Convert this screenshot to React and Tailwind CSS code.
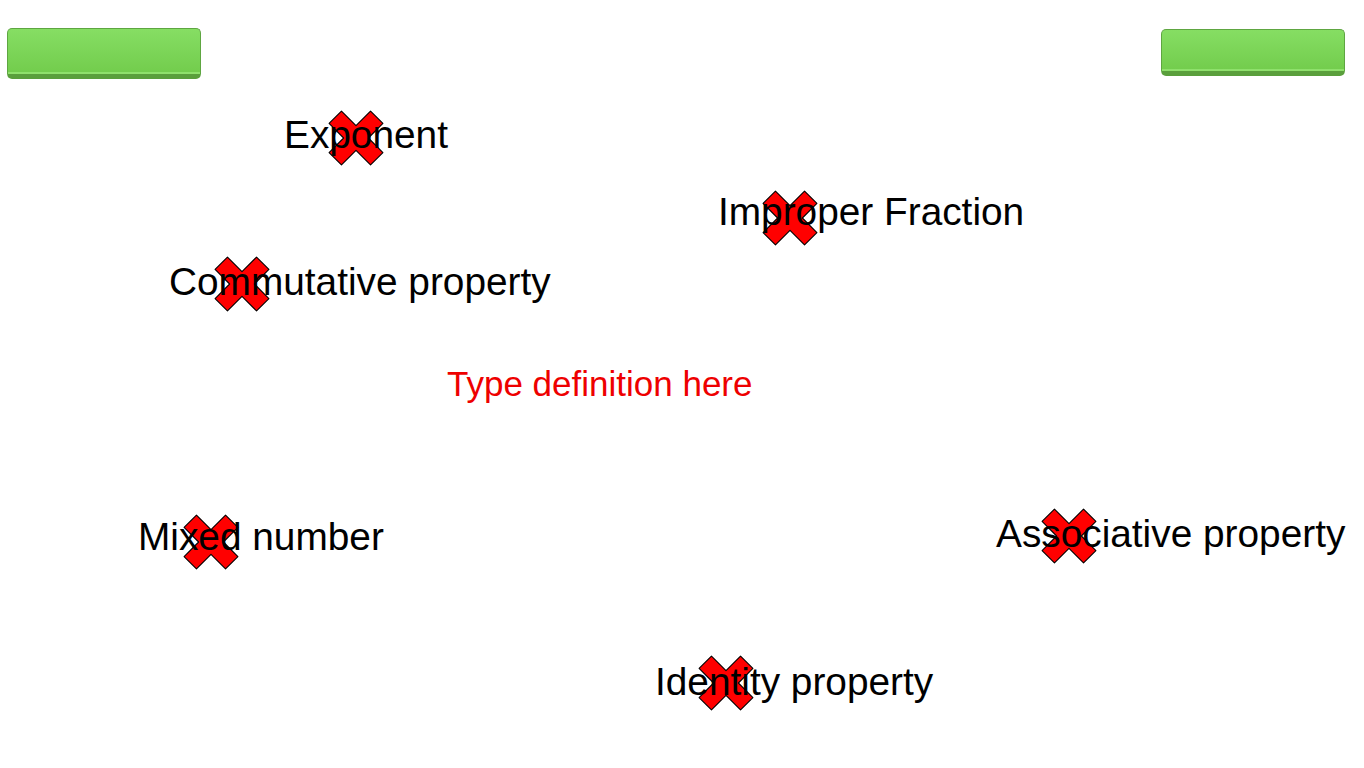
import React from "react";

const words = [
  { text: "Exponent", x: 284, y: 116, cx: 328, cy: 110 },
  { text: "Improper Fraction", x: 718, y: 193, cx: 762, cy: 190 },
  { text: "Commutative property", x: 169, y: 263, cx: 214, cy: 256 },
  { text: "Mixed number", x: 138, y: 518, cx: 183, cy: 514 },
  { text: "Associative property", x: 996, y: 515, cx: 1041, cy: 508 },
  { text: "Identity property", x: 655, y: 663, cx: 698, cy: 655 },
];

function Cross({ x, y }) {
  return (
    <svg
      className="absolute"
      style={{ left: x, top: y }}
      width="56"
      height="56"
      viewBox="-2 -2 104 104"
    >
      <polygon
        points="23,0 50,27 77,0 100,23 73,50 100,77 77,100 50,73 23,100 0,77 27,50 0,23"
        fill="#ff0000"
        stroke="#000"
        strokeWidth="2"
        strokeLinejoin="round"
      />
    </svg>
  );
}

function GreenButton({ className }) {
  return (
    <div
      className={
        "rounded-[5px] border border-[#5ea641] border-b-[5px] border-b-[#5a9f3c] bg-gradient-to-b from-[#86de63] to-[#72cc4c] shadow-[inset_0_-2px_0_#8fe06c] " +
        className
      }
    />
  );
}

export default function App() {
  return (
    <div
      className="relative w-[1364px] h-[768px] overflow-hidden bg-white"
      style={{ fontFamily: '"Liberation Sans", Arial, sans-serif' }}
    >
      <div className="flex justify-between items-start pt-[28px] pl-[7px] pr-[19px]">
        <GreenButton className="w-[194px] h-[51px]" />
        <GreenButton className="w-[184px] h-[47px] mt-[1px]" />
      </div>

      {words.map((w) => (
        <React.Fragment key={w.text}>
          <Cross x={w.cx} y={w.cy} />
          <div
            className="absolute whitespace-nowrap text-[38.8px] leading-none text-black"
            style={{ left: w.x, top: w.y }}
          >
            {w.text}
          </div>
        </React.Fragment>
      ))}

      <div
        className="absolute whitespace-nowrap text-[35px] leading-none text-[#ee0000]"
        style={{ left: 447, top: 366 }}
      >
        Type definition here
      </div>
    </div>
  );
}
